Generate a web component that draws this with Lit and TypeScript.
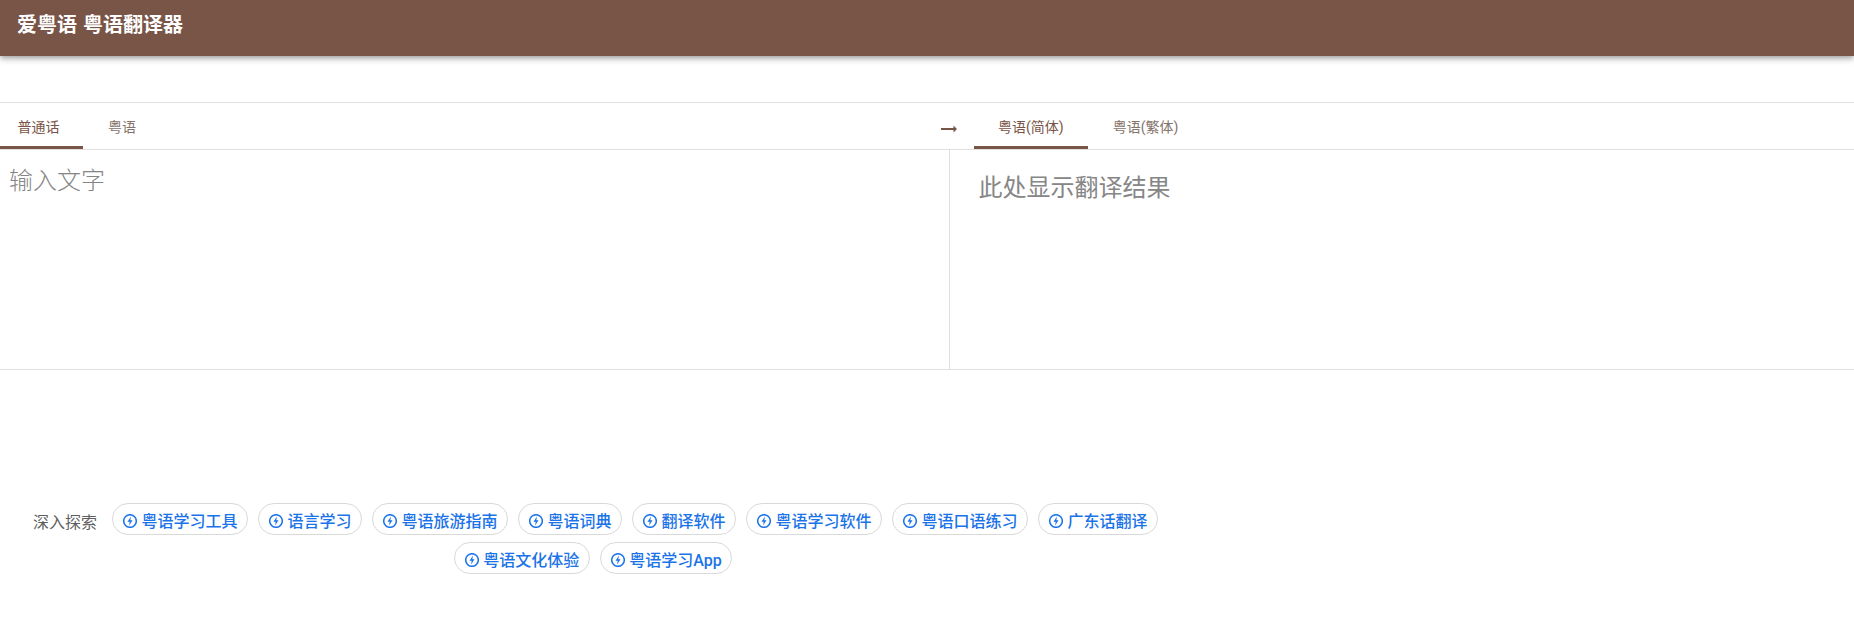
import { LitElement, html, css, svg } from "lit";
import { customElement } from "lit/decorators.js";

const topics = ["粤语学习工具","语言学习","粤语旅游指南","粤语词典","翻译软件","粤语学习软件","粤语口语练习","广东话翻译","粤语文化体验","粤语学习App"];

const bolt = svg`<svg class="bolt" viewBox="0 0 14 14" width="14" height="14" fill="none">
  <circle cx="7" cy="7" r="6.3" stroke="currentColor" stroke-width="1.5"/>
  <path d="M8 2.6 4.5 7.7h2.2l-.6 3.7 3.4-5.2H7.3z" fill="currentColor"/>
</svg>`;

@customElement("app-root")
export class AppRoot extends LitElement {
  static styles = css`
    :host { display: block; min-height: 643px; background: #fff; font-family: Roboto, "Noto Sans CJK SC", sans-serif; color: #795548; }
    .bar { height: 56px; background: #795548; color: #fff; box-shadow: 0 2px 4px -1px rgba(0,0,0,.2), 0 4px 5px 0 rgba(0,0,0,.14), 0 1px 10px 0 rgba(0,0,0,.12); display: flex; padding: 9px 17px 0; box-sizing: border-box; font-size: 20px; font-weight: 700; line-height: 33px; word-spacing: 1px; position: relative; }
    .tabs { margin-top: 46px; border-top: 1px solid #e0e0e0; border-bottom: 1px solid #e0e0e0; height: 46px; display: flex; }
    .side { display: flex; }
    .left { width: 941px; }
    .arrow { width: 33px; display: flex; align-items: center; padding-top: 5px; box-sizing: border-box; }
    .tab { height: 46px; box-sizing: border-box; padding: 0 24px; font-size: 14px; line-height: 48px; color: #85736b; white-space: nowrap; }
    .tab.on { border-bottom: 3px solid #795548; color: #795548; }
    .tab.first { padding: 0 23.5px 0 17.5px; }
    .tab.next { padding-left: 25px; }
    .panes { height: 219px; border-bottom: 1px solid #e0e0e0; display: flex; }
    .input { width: 950px; border-right: 1px solid #e0e0e0; padding: 16px 9px; box-sizing: border-box; font-size: 24px; line-height: 30px; color: #858585; font-weight: 300; }
    .output { padding: 23px 28.5px; font-size: 24px; line-height: 30px; color: #868686; }
    .explore { width: 1191px; margin-top: 133px; display: flex; flex-wrap: wrap; justify-content: center; gap: 7px 10px; }
    .label { font-size: 16px; line-height: 40px; color: #5f5f5f; margin-right: 5px; height: 32px; }
    .chip { height: 32px; box-sizing: border-box; border: 1px solid #d9d9d9; border-radius: 16px; padding: 2px 9.5px 0; display: flex; align-items: center; gap: 4.5px; color: #1a73e8; font-size: 16px; font-weight: 500; white-space: nowrap; }
    .chip:last-child { margin-right: 5px; }
    .bolt { flex: none; margin: 2px 0 0 .5px; }
  `;
  render() {
    return html`
      <div class="bar">爱粤语 粤语翻译器</div>
      <div class="tabs">
        <div class="side left">
          <div class="tab on first">普通话</div>
          <div class="tab next">粤语</div>
        </div>
        <div class="arrow">
          <svg width="16" height="8" viewBox="0 0 16 8"><path d="M0 3h12.5V.5L16 4l-3.5 3.5V5H0z" fill="#795548"/></svg>
        </div>
        <div class="side">
          <div class="tab on">粤语(简体)</div>
          <div class="tab next">粤语(繁体)</div>
        </div>
      </div>
      <div class="panes">
        <div class="input">输入文字</div>
        <div class="output">此处显示翻译结果</div>
      </div>
      <div class="explore">
        <span class="label">深入探索</span>
        ${topics.map(t => html`<span class="chip">${bolt}${t}</span>`)}
      </div>
    `;
  }
}
